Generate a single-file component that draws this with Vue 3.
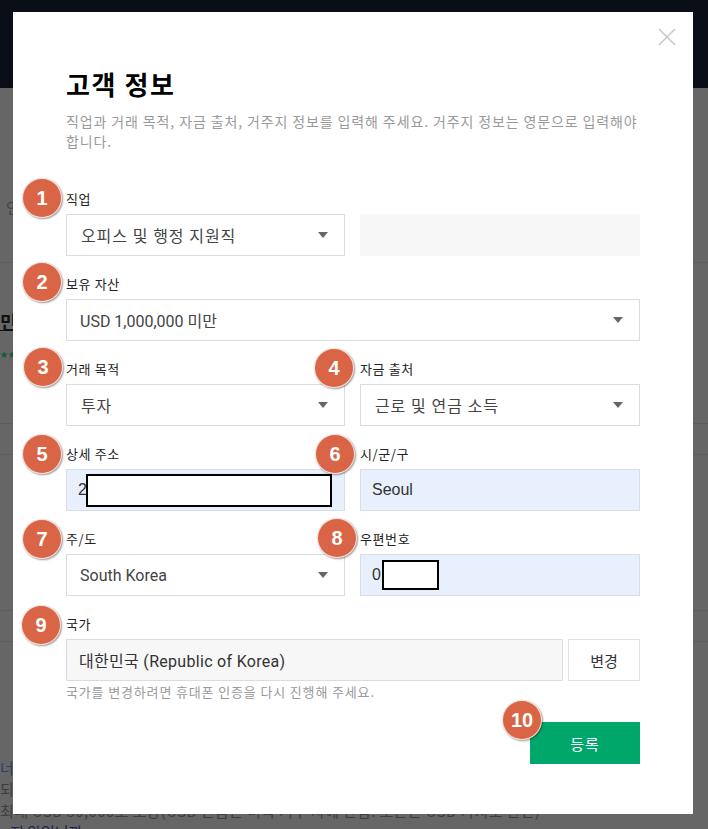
<script setup>
const rows = [
  [{ n: 1, label: '직업', kind: 'select', value: '오피스 및 행정 지원직', ko: true, bx: -44, by: -11 }, { kind: 'blank' }],
  [{ n: 2, label: '보유 자산', kind: 'select', value: 'USD 1,000,000 미만', wide: true, bx: -44, by: -12 }],
  [{ n: 3, label: '거래 목적', kind: 'select', value: '투자', ko: true, bx: -43, by: -12 }, { n: 4, label: '자금 출처', kind: 'select', value: '근로 및 연금 소득', ko: true, bx: -46, by: -11 }],
  [{ n: 5, label: '상세 주소', kind: 'input', value: '2', mask: 'm1', bx: -44, by: -10 }, { n: 6, label: '시/군/구', kind: 'input', value: 'Seoul', bx: -45, by: -10 }],
  [{ n: 7, label: '주/도', kind: 'select', value: 'South Korea', bx: -44, by: -10 }, { n: 8, label: '우편번호', kind: 'input', value: '0', mask: 'm2', bx: -43, by: -11 }],
]
</script>

<template>
  <div class="page">
    <header class="topbar"></header>
    <div class="backdrop">
      <span class="bg-a">인</span>
      <span class="bg-b">민증</span>
      <span class="bg-c">★★</span>
      <i class="bg-line l0"></i><i class="bg-line l1"></i><i class="bg-line l2"></i><i class="bg-line l3"></i><i class="bg-line l4"></i>
      <span class="bg-d">너, 수</span>
      <span class="bg-e">되다</span>
      <span class="bg-f">최대 USD 50,000로 보장(USD 잔금은 미국 거주 자에 한함: 모든은 USD 가치로 환산)</span>
      <span class="bg-g">지 않입니까</span>
    </div>

    <section class="modal">
      <svg class="close" width="18" height="18" viewBox="0 0 18 18"><path d="M1 1 17 17M17 1 1 17" stroke="#c9c9c9" stroke-width="1.6" fill="none" /></svg>
      <h1>고객 정보</h1>
      <p class="desc">직업과 거래 목적, 자금 출처, 거주지 정보를 입력해 주세요. 거주지 정보는 영문으로 입력해야 합니다.</p>

      <form class="form" @submit.prevent>
        <div v-for="(row, i) in rows" :key="i" class="row">
          <template v-for="(f, j) in row" :key="j">
            <div v-if="f.kind === 'blank'" class="field blank-field"><div class="blank"></div></div>
            <div v-else class="field" :class="{ wide: f.wide }">
              <span class="badge" :style="{ left: f.bx + 'px', top: f.by + 'px' }">{{ f.n }}</span>
              <label>{{ f.label }}</label>
              <div v-if="f.kind === 'select'" class="select">
                <span :class="{ ko: f.ko }">{{ f.value }}</span>
                <svg class="caret" width="10" height="6" viewBox="0 0 10 6"><path d="M0 0h10L5 6z" fill="#666" /></svg>
              </div>
              <div v-else class="input">
                <span>{{ f.value }}</span>
                <i v-if="f.mask" class="mask" :class="f.mask"></i>
              </div>
            </div>
          </template>
        </div>

        <div class="field country">
          <span class="badge" style="left:-45px;top:-9px">9</span>
          <label>국가</label>
          <div class="country-row">
            <div class="readonly">대한민국 (Republic of Korea)</div>
            <button type="button" class="change">변경</button>
          </div>
          <p class="hint">국가를 변경하려면 휴대폰 인증을 다시 진행해 주세요.</p>
        </div>

        <div class="actions">
          <div class="submit-wrap">
            <span class="badge ten">10</span>
            <button type="button" class="submit">등록</button>
          </div>
        </div>
      </form>
    </section>
  </div>
</template>

<style>
html, body { margin: 0; padding: 0; }
</style>

<style scoped>
.page {
  position: relative;
  width: 708px;
  height: 829px;
  overflow: hidden;
  background: #666;
  font-family: "Noto Sans CJK KR", "Liberation Sans", sans-serif;
}
.topbar { height: 88px; background: #0a0e17; }
.backdrop { position: absolute; inset: 88px 0 0 0; color: #3e3e3e; font-size: 15px; line-height: 22px; }
.backdrop span { position: absolute; white-space: nowrap; }
.bg-a { left: 6px; top: 108px; font-size: 16px; color: #444; }
.bg-b { left: 0; top: 222px; font-size: 18px; font-weight: 700; color: #111; text-decoration: underline; }
.bg-c { left: 0; top: 255px; font-size: 8px; color: #0c5a38; }
.bg-d { left: 0; top: 669px; color: #2f3a6a; }
.bg-e { left: 0; top: 690px; }
.bg-f { left: 0; top: 712px; letter-spacing: 0.35px; }
.bg-g { left: 10px; top: 733px; color: #18224f; }
.bg-line { position: absolute; left: 0; right: 0; height: 1px; background: #5d5d5d; }
.l0 { top: 174px; } .l1 { top: 335px; } .l2 { top: 366px; } .l3 { top: 522px; } .l4 { top: 553px; }

.modal {
  position: absolute;
  left: 13px;
  top: 12px;
  width: 680px;
  height: 802px;
  box-sizing: border-box;
  padding: 54px 53px 0;
  background: #fff;
}
.close { position: absolute; left: 645px; top: 16px; }
h1 { margin: 0; font-size: 26px; line-height: 36px; font-weight: 700; color: #000; letter-spacing: 1.6px; }
.desc { margin: 9px 0 0; font-size: 14px; line-height: 20px; color: #9a9a9a; letter-spacing: 0.88px; word-break: keep-all; }
.form { display: flex; flex-direction: column; margin-top: 38px; }
.row { display: grid; grid-template-columns: 279px 280px; column-gap: 15px; height: 85px; }
.field { position: relative; min-width: 0; }
.blank-field { padding-top: 25px; }
.wide { grid-column: 1 / -1; }
label { display: block; height: 25px; font-size: 13px; line-height: 20px; color: #222; letter-spacing: 0.6px; }
.badge {
  position: absolute;
  width: 38px;
  height: 38px;
  display: flex;
  align-items: center;
  justify-content: center;
  border: 1px solid rgba(255, 255, 255, 0.8);
  border-radius: 50%;
  background: #d96546;
  color: #fff;
  font: 700 20px "Liberation Sans", sans-serif;
  box-shadow: 1px 1px 2px rgba(0, 0, 0, 0.4);
  z-index: 2;
}
.select, .input, .blank, .readonly {
  box-sizing: border-box;
  height: 42px;
  display: flex;
  align-items: center;
}
.select {
  justify-content: space-between;
  padding: 0 16px 0 13px;
  border: 1px solid #dcdcdc;
  font-family: Roboto, "Noto Sans CJK KR", sans-serif;
  font-size: 16px;
  color: #444;
}
.ko { margin-left: 1px; letter-spacing: 0.9px; }
.caret { flex: none; }
.blank { background: #f7f7f7; }
.input {
  position: relative;
  padding: 0 11px;
  border: 1px solid #d8dde6;
  background: #e8f0fe;
  font-family: "Liberation Sans", sans-serif;
  font-size: 16px;
  color: #333;
}
.mask { position: absolute; background: #fff; border: 2px solid #000; box-sizing: border-box; }
.m1 { left: 19px; top: 4px; width: 246px; height: 33px; }
.m2 { left: 21px; top: 5px; width: 57px; height: 30px; }
.country { height: 108px; }
.country-row { display: flex; gap: 5px; }
.readonly {
  flex: 1;
  padding: 0 12px;
  border: 1px solid #dcdcdc;
  background: #f7f7f7;
  font-family: Roboto, "Noto Sans CJK KR", sans-serif;
  font-size: 16px;
  letter-spacing: 0.3px;
  color: #333;
}
.change {
  width: 72px;
  height: 42px;
  padding: 0;
  border: 1px solid #e2e2e2;
  background: #fff;
  font: 15px "Noto Sans CJK KR", sans-serif;
  color: #333;
}
.hint { margin: 2px 0 0; font-size: 13px; line-height: 18px; color: #9a9a9a; letter-spacing: 0.85px; }
.actions { display: flex; justify-content: flex-end; }
.submit-wrap { position: relative; }
.submit {
  display: block;
  width: 110px;
  height: 42px;
  border: 0;
  padding: 0;
  background: #00a76b;
  color: #fff;
  font: 15px "Noto Sans CJK KR", sans-serif;
  letter-spacing: 1px;
}
.ten { left: -28px; top: -22px; }
</style>
